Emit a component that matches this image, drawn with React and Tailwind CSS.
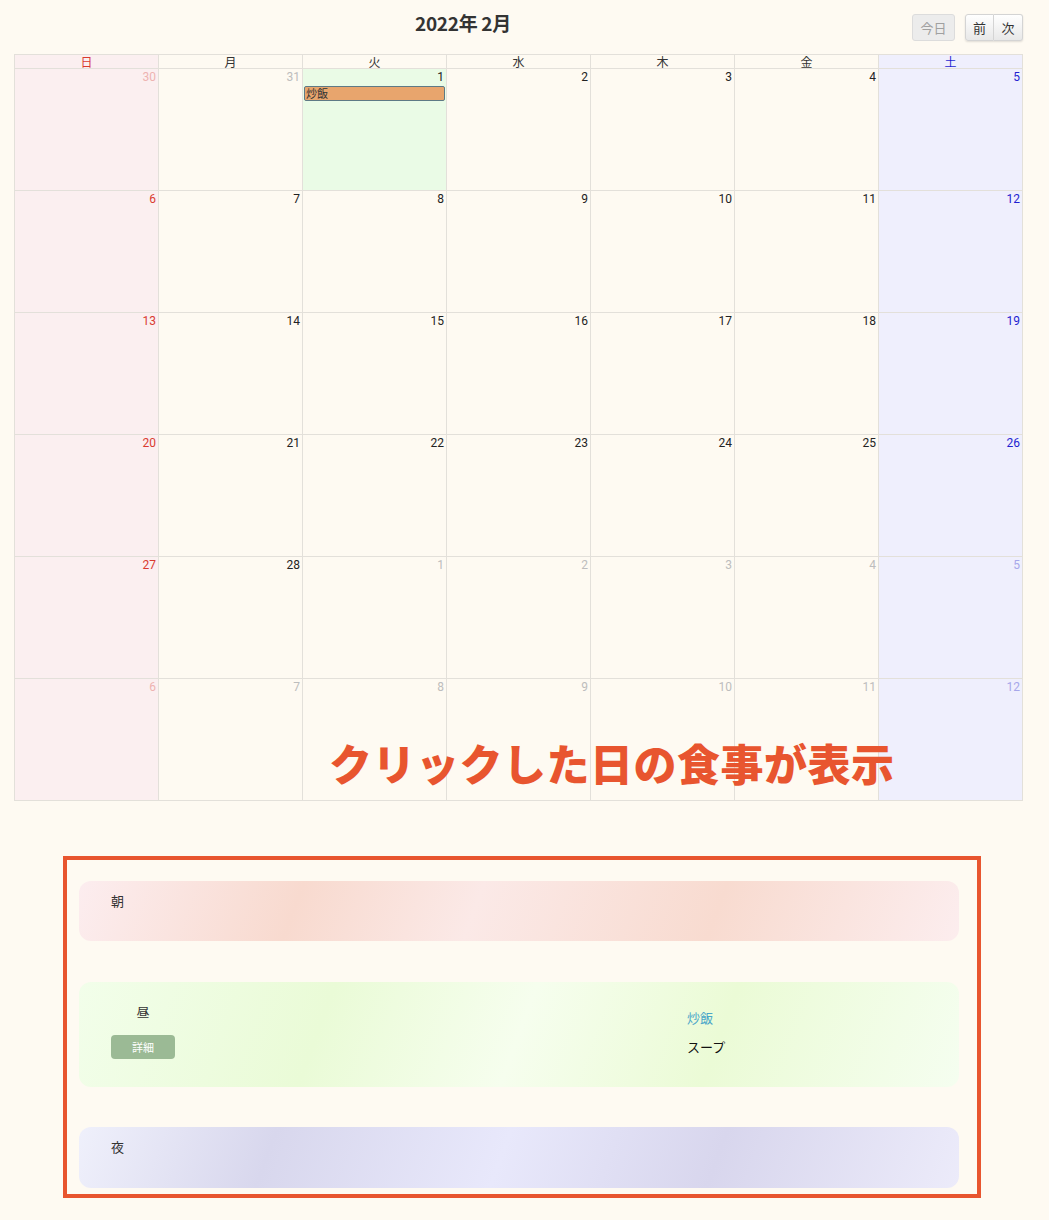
import React from "react";

const FONT = { fontFamily: '"Noto Sans CJK JP", "Noto Sans", Roboto, sans-serif' };
const NUMFONT = { fontFamily: 'Roboto, "Noto Sans CJK JP", sans-serif' };

const heads = ["日", "月", "火", "水", "木", "金", "土"];

const weeks = [
  [[30, 0], [31, 0], [1, 1], [2, 1], [3, 1], [4, 1], [5, 1]],
  [[6, 1], [7, 1], [8, 1], [9, 1], [10, 1], [11, 1], [12, 1]],
  [[13, 1], [14, 1], [15, 1], [16, 1], [17, 1], [18, 1], [19, 1]],
  [[20, 1], [21, 1], [22, 1], [23, 1], [24, 1], [25, 1], [26, 1]],
  [[27, 1], [28, 1], [1, 0], [2, 0], [3, 0], [4, 0], [5, 0]],
  [[6, 0], [7, 0], [8, 0], [9, 0], [10, 0], [11, 0], [12, 0]],
];

function numColor(col, cur) {
  if (col === 0) return cur ? "text-[#d93b30]" : "text-[#eeb3b0]";
  if (col === 6) return cur ? "text-[#1f1fd1]" : "text-[#a7a7ea]";
  return cur ? "text-[#222222]" : "text-[#bdbdbd]";
}

function cellBg(col, isToday) {
  if (isToday) return "bg-[#eafbe6]";
  if (col === 0) return "bg-[#fbeff0]";
  if (col === 6) return "bg-[#efeffd]";
  return "";
}

export default function App() {
  return (
    <div className="min-h-screen bg-[#fefaf2] relative" style={FONT}>
      <div className="w-[1009px] ml-[14px] pt-[14px]">
        {/* Toolbar */}
        <div className="flex justify-between items-start h-[27px] mb-[13px]">
          <div />
          <h2 className="text-[19px] font-bold text-[#333] leading-none -mt-[1px] tracking-[-0.3px]">
            2022年 2月
          </h2>
          <div className="flex gap-[10px]">
            <button className="h-[27px] w-[43px] rounded-[3px] border border-[#dcdcdc] bg-[#ececec] text-[13px] text-[#a0a0a0] leading-none">
              今日
            </button>
            <div className="flex shadow-[0_1px_2px_rgba(0,0,0,0.12)] rounded-[3px]">
              <button className="h-[27px] w-[29px] rounded-l-[3px] border border-[#d4d4d4] bg-[linear-gradient(#ffffff,#e8e8e8)] text-[13px] text-[#333] leading-none">
                前
              </button>
              <button className="h-[27px] w-[29px] rounded-r-[3px] border border-l-0 border-[#d4d4d4] bg-[linear-gradient(#ffffff,#e8e8e8)] text-[13px] text-[#333] leading-none">
                次
              </button>
            </div>
          </div>
        </div>

        {/* Calendar */}
        <div className="border-l border-t border-[#e3e0da]">
          <div className="grid grid-cols-7">
            {heads.map((h, i) => (
              <div
                key={h}
                className={`h-[14px] border-r border-b border-[#e3e0da] text-center text-[12px] leading-[14px] ${
                  i === 0
                    ? "bg-[#fbeff0] text-[#d93b30]"
                    : i === 6
                    ? "bg-[#efeffd] text-[#1f1fd1]"
                    : "text-[#333]"
                }`}
              >
                {h}
              </div>
            ))}
          </div>
          {weeks.map((w, wi) => (
            <div key={wi} className="grid grid-cols-7">
              {w.map(([d, cur], ci) => {
                const isToday = wi === 0 && ci === 2;
                return (
                  <div
                    key={ci}
                    className={`h-[122px] border-r border-b border-[#e3e0da] ${cellBg(ci, isToday)}`}
                  >
                    <div
                      style={NUMFONT}
                      className={`text-right pr-[2px] pt-[1px] text-[12px] leading-[14px] ${numColor(ci, cur)}`}
                    >
                      {d}
                    </div>
                    {isToday && (
                      <div className="mx-[1px] mt-[2px] h-[15px] rounded-[2px] border border-[#5e7a86] bg-[#e8a56d] text-[11px] leading-[13px] text-[#333] pl-[1px]">
                        炒飯
                      </div>
                    )}
                  </div>
                );
              })}
            </div>
          ))}
        </div>
      </div>

      {/* annotation */}
      <div className="absolute left-[329px] top-[741px] text-[43px] font-black leading-none text-[#e8552f] tracking-[0.5px]">
        クリックした日の食事が表示
      </div>

      {/* Meals */}
      <div className="ml-[63px] mt-[55px] w-[918px] border-[4px] border-[#e8552f] pt-[21px] pb-[6px] pl-[12px] pr-[18px]">
        <div className="h-[60px] rounded-[12px] bg-[linear-gradient(110deg,#fcedef_0%,#f8dacf_25%,#fbe9e7_45%,#f8dbd0_72%,#fcedee_100%)] pl-[32px] pt-[11px]">
          <div className="text-[13px] text-[#333] leading-[18px]">朝</div>
        </div>

        <div className="mt-[41px] h-[105px] rounded-[12px] bg-[linear-gradient(110deg,#f2feea_0%,#eafbd7_28%,#f6feee_50%,#ebfbd6_72%,#f5fef0_100%)] flex">
          <div className="w-[64px] ml-[32px] pt-[22px] flex flex-col items-center">
            <div className="text-[13px] text-[#333] leading-[16px]">昼</div>
            <button className="mt-[15px] w-[64px] h-[24px] rounded-[4px] bg-[#9bba95] text-white text-[11px] leading-none">
              詳細
            </button>
          </div>
          <div className="ml-[512px] pt-[27px] flex flex-col">
            <div className="text-[13px] text-[#4aa6c9] leading-[18px]">炒飯</div>
            <div className="mt-[11px] text-[13px] text-[#111] leading-[18px]">スープ</div>
          </div>
        </div>

        <div className="mt-[40px] h-[61px] rounded-[12px] bg-[linear-gradient(110deg,#eff0fb_0%,#d8d7ed_22%,#e8e8fb_48%,#d8d6ed_72%,#ecebfa_100%)] pl-[32px] pt-[11px]">
          <div className="text-[13px] text-[#333] leading-[18px]">夜</div>
        </div>
      </div>
    </div>
  );
}
